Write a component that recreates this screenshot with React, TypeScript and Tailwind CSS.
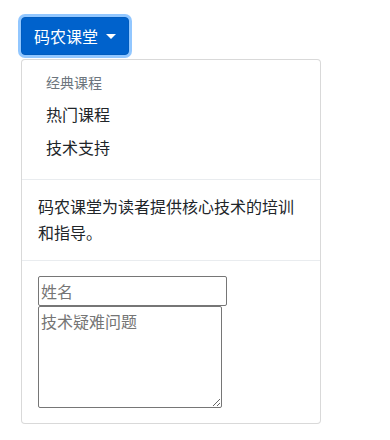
import React from 'react';

export default function App() {
  return (
    <div
      className="min-h-[440px] bg-white pl-[21px] pt-[17px] text-[#212529]"
      style={{ fontFamily: '"Noto Sans CJK SC", "Noto Sans", sans-serif' }}
    >
      <button
        type="button"
        className="rounded-[4px] border border-[#005cbf] bg-[#0062cc] px-3 py-1.5 text-base leading-6 text-white shadow-[0_0_0_3px_rgba(38,143,255,0.5)]"
      >
        码农课堂{' '}
        <span className="ml-[4px] inline-block border-x-[5px] border-t-[5px] border-x-transparent border-t-white align-[4px]" />
      </button>

      <div className="mt-[4px] w-[300px] rounded-[4px] border border-black/15 bg-white pt-1 pb-2">
        <h6 className="px-6 pt-2 pb-[5px] text-sm leading-[21px] text-[#6c757d]">经典课程</h6>
        <a href="#" className="block px-6 py-1 text-base leading-[25px]">热门课程</a>
        <a href="#" className="block px-6 py-1 text-base leading-[25px]">技术支持</a>
        <div className="mt-[15px] mb-[13px] border-t border-[#e9ecef]" />
        <p className="px-4 text-base leading-[26px]">码农课堂为读者提供核心技术的培训和指导。</p>
        <div className="mt-[15px] mb-[11px] border-t border-[#e9ecef]" />
        <form className="flex flex-col items-start px-4 pt-1 pb-[7px]">
          <input
            type="text"
            placeholder="姓名"
            className="h-[30px] w-[189px] rounded-[2px] border border-[#767676] px-[2px] text-base leading-6 placeholder:text-[#757575]"
          />
          <textarea
            rows={4}
            placeholder="技术疑难问题"
            className="h-[102px] w-[184px] resize rounded-[2px] border border-[#767676] p-[2px] text-base leading-6 placeholder:text-[#757575]"
          />
        </form>
      </div>
    </div>
  );
}
